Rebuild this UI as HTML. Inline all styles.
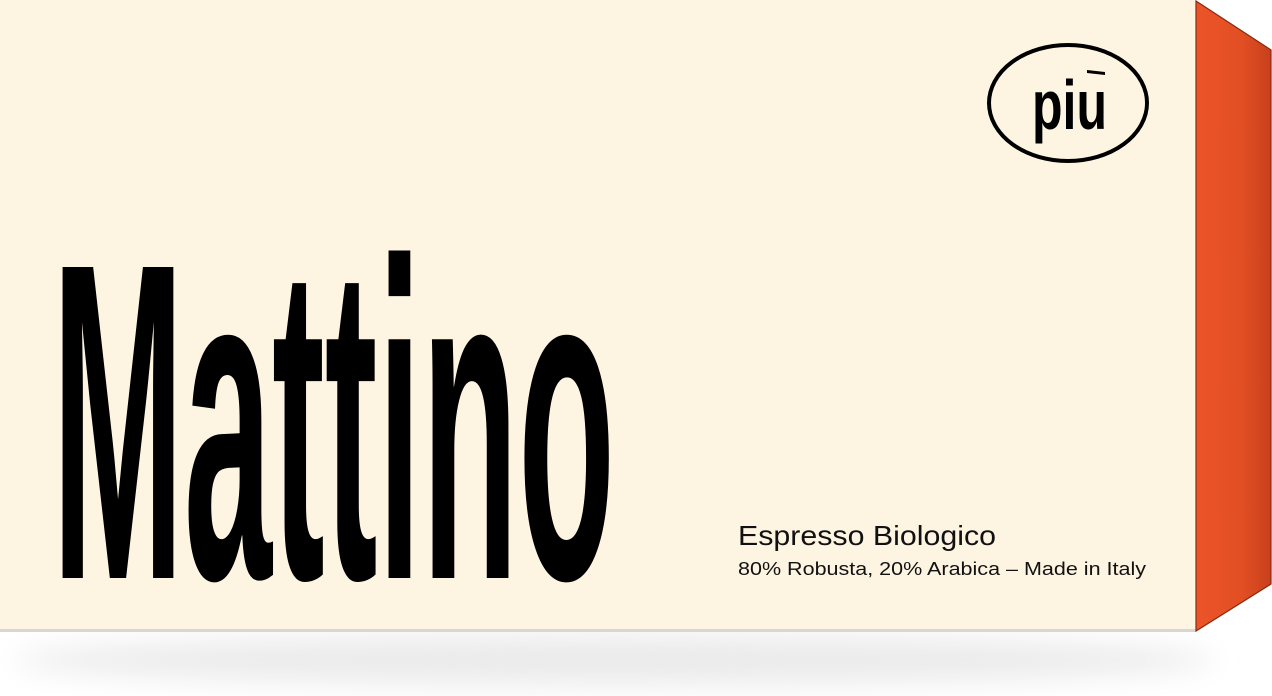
<!DOCTYPE html>
<html><head><meta charset="utf-8"><style>
html,body{margin:0;padding:0;background:#fff;width:1272px;height:696px;overflow:hidden}
</style></head><body>
<svg width="1272" height="696" viewBox="0 0 1272 696" xmlns="http://www.w3.org/2000/svg">
<defs>
<filter id="b" x="-20%" y="-100%" width="140%" height="300%"><feGaussianBlur stdDeviation="14"/></filter>
<linearGradient id="s" x1="0" x2="1" y1="0" y2="0"><stop offset="0" stop-color="#ec5428"/><stop offset="0.6" stop-color="#e24f24"/><stop offset="1" stop-color="#c8401c"/></linearGradient>
</defs>
<ellipse cx="615" cy="660" rx="600" ry="26" fill="#ebebeb" filter="url(#b)"/>
<rect x="0" y="0" width="1196" height="632" fill="#fef4e2"/>
<rect x="0" y="629" width="1196" height="3" fill="#d8d6d2"/>
<polygon points="1196,1 1271,50 1271,584 1196,631" fill="url(#s)" stroke="#8a2a10" stroke-width="1.2"/>
<text x="52" y="578" font-family="Liberation Sans Narrow, Liberation Sans, sans-serif" font-weight="bold" font-size="452" textLength="563" lengthAdjust="spacingAndGlyphs" fill="#000">Mattino</text>
<text x="738" y="545" font-family="Liberation Sans, sans-serif" font-size="28" textLength="258" lengthAdjust="spacingAndGlyphs" fill="#111">Espresso Biologico</text>
<text x="738" y="575" font-family="Liberation Sans, sans-serif" font-size="18" textLength="408" lengthAdjust="spacingAndGlyphs" fill="#111">80% Robusta, 20% Arabica – Made in Italy</text>
<ellipse cx="1068" cy="103" rx="79" ry="58" fill="none" stroke="#000" stroke-width="4"/>
<text x="1032" y="129" font-family="Liberation Sans Narrow, Liberation Sans, sans-serif" font-weight="bold" font-size="70" textLength="75" lengthAdjust="spacingAndGlyphs" fill="#000">piu</text>
<polygon points="1087,70 1105,72 1105,75 1087,73" fill="#000"/>
</svg>
</body></html>
